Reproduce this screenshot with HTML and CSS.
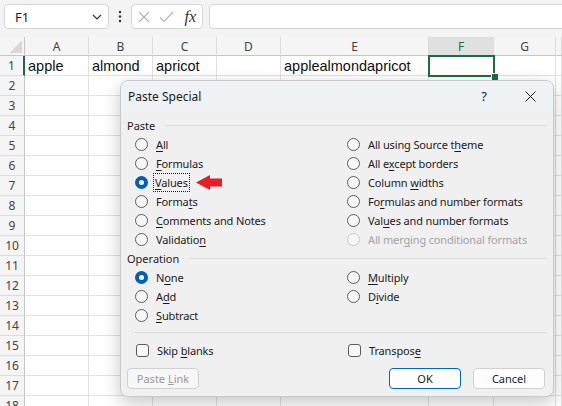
FILE: index.html
```html
<!DOCTYPE html>
<html lang="en">
<head>
    <meta charset="UTF-8">
    <meta name="viewport" content="width=device-width, initial-scale=1.0">
    <title>Paste Special</title>
    <link rel="stylesheet" href="styles.css">
</head>
<body>
    <div class="app">
        <div class="toolbar">
            <div class="namebox">
                <span>F1</span>
                <svg width="10" height="6" viewBox="0 0 10 6"><path d="M1 1 L5 5 L9 1" fill="none" stroke="#333" stroke-width="1.2"/></svg>
            </div>
            <div class="more">
                <svg width="4" height="13" viewBox="0 0 4 13"><circle cx="2" cy="2" r="1.2" fill="#333"/><circle cx="2" cy="6.5" r="1.2" fill="#333"/><circle cx="2" cy="11" r="1.2" fill="#333"/></svg>
            </div>
            <div class="fx-box">
                <span class="fx-btn"><svg width="12" height="12" viewBox="0 0 12 12"><path d="M1 1 L11 11 M11 1 L1 11" stroke="#b4b4b4" stroke-width="1.2"/></svg></span>
                <span class="fx-btn"><svg width="15" height="12" viewBox="0 0 15 12"><path d="M1 6.5 L5 10.5 L14 1" fill="none" stroke="#b4b4b4" stroke-width="1.2"/></svg></span>
                <span class="fx-btn fx">fx</span>
            </div>
            <div class="formula"></div>
        </div>

        <div class="sheet" id="sheet">
            <div class="hd corner"></div>
            <div class="hd">A</div>
            <div class="hd">B</div>
            <div class="hd">C</div>
            <div class="hd">D</div>
            <div class="hd">E</div>
            <div class="hd hd-active">F</div>
            <div class="hd">G</div>
            <div class="hd"></div>

            <div class="rh rh-active">1</div>
            <div class="cell">apple</div>
            <div class="cell">almond</div>
            <div class="cell">apricot</div>
            <div class="cell"></div>
            <div class="cell">applealmondapricot</div>
            <div class="cell selected"><span class="sel-box"><span class="handle"></span></span></div>
            <div class="cell"></div>
            <div class="cell"></div>
        </div>

        <div class="dialog">
            <div class="dlg-title">
                <span>Paste Special</span>
                <div class="title-btns">
                    <span class="tbtn">?</span>
                    <span class="tbtn"><svg width="11" height="11" viewBox="0 0 11 11"><path d="M0.5 0.5 L10.5 10.5 M10.5 0.5 L0.5 10.5" stroke="#1b1b1b" stroke-width="1"/></svg></span>
                </div>
            </div>
            <div class="dlg-body">
                <div class="legend"><span>Paste</span><i></i></div>
                <div class="options">
                    <label class="opt"><span class="radio"></span><span><u>A</u>ll</span></label>
                    <label class="opt"><span class="radio"></span><span>All using Source t<u>h</u>eme</span></label>
                    <label class="opt"><span class="radio"></span><span><u>F</u>ormulas</span></label>
                    <label class="opt"><span class="radio"></span><span>All e<u>x</u>cept borders</span></label>
                    <label class="opt"><span class="radio checked"></span><span class="focus"><u>V</u>alues</span>
                        <svg class="arrow" width="27" height="16" viewBox="0 0 27 16"><path d="M0 7.5 L14 0 L14 3.5 L26 3.5 L26 11.5 L14 11.5 L14 15 Z" fill="#ec1c24"/></svg>
                    </label>
                    <label class="opt"><span class="radio"></span><span>Column <u>w</u>idths</span></label>
                    <label class="opt"><span class="radio"></span><span>Forma<u>t</u>s</span></label>
                    <label class="opt"><span class="radio"></span><span>Fo<u>r</u>mulas and number formats</span></label>
                    <label class="opt"><span class="radio"></span><span><u>C</u>omments and Notes</span></label>
                    <label class="opt"><span class="radio"></span><span>Val<u>u</u>es and number formats</span></label>
                    <label class="opt"><span class="radio"></span><span>Validatio<u>n</u></span></label>
                    <label class="opt disabled"><span class="radio"></span><span>All mer<u>g</u>ing conditional formats</span></label>
                </div>

                <div class="legend"><span>Operation</span><i></i></div>
                <div class="options">
                    <label class="opt"><span class="radio checked"></span><span>N<u>o</u>ne</span></label>
                    <label class="opt"><span class="radio"></span><span><u>M</u>ultiply</span></label>
                    <label class="opt"><span class="radio"></span><span>A<u>d</u>d</span></label>
                    <label class="opt"><span class="radio"></span><span>D<u>i</u>vide</span></label>
                    <label class="opt"><span class="radio"></span><span><u>S</u>ubtract</span></label>
                </div>

                <div class="sep"></div>

                <div class="options checks">
                    <label class="opt"><span class="check"></span><span>Skip <u>b</u>lanks</span></label>
                    <label class="opt"><span class="check"></span><span>Transpos<u>e</u></span></label>
                </div>

                <div class="buttons">
                    <button class="btn" disabled>Paste <u>L</u>ink</button>
                    <span class="spacer"></span>
                    <button class="btn primary">OK</button>
                    <button class="btn">Cancel</button>
                </div>
            </div>
        </div>
    </div>
    <script>
        (function() {
            const sheet = document.getElementById('sheet');

            for (let r = 2; r <= 18; r++) {
                const head = document.createElement('div');
                head.className = 'rh';
                head.textContent = r;
                sheet.appendChild(head);

                for (let c = 0; c < 8; c++) {
                    const cell = document.createElement('div');
                    cell.className = 'cell';
                    sheet.appendChild(cell);
                }
            }
        })();
    </script>
</body>
</html>
```

FILE: styles.css
```css
* {
    margin: 0;
    padding: 0;
    box-sizing: border-box;
}

body {
    width: 562px;
    height: 406px;
    overflow: hidden;
    font-family: "Noto Sans", sans-serif;
    color: #1b1b1b;
    background-color: #fff;
}

.app {
    position: relative;
    height: 406px;
    overflow: hidden;
}

/* formula bar */

.toolbar {
    display: flex;
    align-items: flex-start;
    height: 37px;
    padding: 4px 0 0 4px;
    background-color: #f3f3f3;
}

.namebox {
    display: flex;
    align-items: center;
    justify-content: space-between;
    width: 105px;
    height: 25px;
    padding: 0 6px 0 10px;
    font-size: 13px;
    background-color: #fff;
    border: 1px solid #d6d6d6;
    border-radius: 4px;
}

.more {
    display: flex;
    align-items: center;
    justify-content: center;
    width: 22px;
    height: 25px;
}

.fx-box {
    display: flex;
    width: 72px;
    height: 25px;
    background-color: #fff;
    border: 1px solid #d6d6d6;
    border-radius: 4px;
}

.fx-btn {
    display: flex;
    align-items: center;
    justify-content: center;
    width: 23.3px;
}

.fx {
    font-family: "Liberation Serif", serif;
    font-style: italic;
    font-size: 16px;
    color: #333;
}

.formula {
    flex: 1;
    height: 25px;
    margin: 0 -10px 0 6px;
    background-color: #fff;
    border: 1px solid #d6d6d6;
    border-radius: 4px;
}

/* grid */

.sheet {
    display: grid;
    grid-template-columns: 25px 64px 64px 64px 64px 148px 65px 62px 1fr;
    grid-template-rows: 19px;
    grid-auto-rows: 20px;
}

.hd {
    display: flex;
    align-items: center;
    justify-content: center;
    font-size: 12px;
    color: #444;
    background-color: #f5f5f5;
    border-right: 1px solid #dcdcdc;
    border-bottom: 1px solid #c6c6c6;
}

.hd-active {
    color: #1e6b41;
    background-color: #e0e0e0;
}

.corner {
    background-image: linear-gradient(135deg, transparent 50%, #d8d8d8 50%);
    background-size: 13px 13px;
    background-position: right 2px bottom 2px;
    background-repeat: no-repeat;
    border-right-color: #c6c6c6;
}

.rh {
    display: flex;
    align-items: center;
    justify-content: center;
    font-size: 12px;
    color: #444;
    background-color: #f5f5f5;
    border-right: 1px solid #c6c6c6;
    border-bottom: 1px solid #dcdcdc;
}

.rh-active {
    border-right: 2px solid #1e6b41;
}

.cell {
    position: relative;
    display: flex;
    align-items: center;
    padding-left: 3px;
    font-family: "Liberation Sans", sans-serif;
    font-size: 14.5px;
    color: #111;
    border-right: 1px solid #e1e1e1;
    border-bottom: 1px solid #e1e1e1;
}

.selected {
    z-index: 2;
}

.sel-box {
    position: absolute;
    top: -1px;
    left: -1px;
    width: 67px;
    height: 22px;
    border: 2px solid #1e6b41;
}

.handle {
    position: absolute;
    right: -5px;
    bottom: -5px;
    width: 7px;
    height: 7px;
    background-color: #1e6b41;
    border-top: 1px solid #fff;
    border-left: 1px solid #fff;
}

/* dialog */

.dialog {
    position: absolute;
    z-index: 5;
    top: 80px;
    left: 120px;
    width: 434px;
    height: 317px;
    background-color: #f0f0f0;
    border: 1px solid #c9c9c9;
    border-radius: 8px;
    box-shadow: 0 6px 18px rgba(0, 0, 0, 0.22);
    overflow: hidden;
    font-size: 11px;
}

.dlg-title {
    display: flex;
    align-items: center;
    justify-content: space-between;
    height: 30px;
    padding-left: 7px;
    font-size: 12px;
    background-color: #eff2f5;
}

.title-btns {
    display: flex;
    height: 100%;
}

.tbtn {
    display: flex;
    align-items: center;
    justify-content: center;
    width: 46px;
    font-size: 13px;
}

.dlg-body {
    padding: 5px 6px 0 6px;
}

.legend {
    display: flex;
    align-items: center;
    height: 19px;
}

.legend i {
    flex: 1;
    height: 1px;
    margin-left: 10px;
    background-color: #d9d9d9;
}

.options {
    display: grid;
    grid-template-columns: 212px 1fr;
    grid-auto-rows: 19px;
    padding-left: 8px;
    letter-spacing: -0.15px;
}

.opt {
    display: flex;
    align-items: center;
    white-space: nowrap;
}

.opt u {
    text-underline-offset: 2px;
}

.radio,
.check {
    flex: none;
    width: 13px;
    height: 13px;
    margin-right: 8px;
    background-color: #f7f7f7;
    border: 1px solid #5c5c5c;
    border-radius: 50%;
}

.check {
    border-radius: 3px;
}

.radio.checked {
    background-color: #fff;
    border: 4px solid #005fb8;
}

.disabled {
    color: #a3a3a3;
}

.disabled .radio {
    border-color: #c8c8c8;
}

.focus {
    padding: 1px 1px;
    margin-left: -2px;
    outline: 1px dotted #222;
}

.arrow {
    margin-left: 7px;
}

.sep {
    height: 1px;
    margin: 7px 0 0 8px;
    background-color: #d9d9d9;
}

.checks {
    margin-top: 8px;
}

.checks .opt {
    padding-left: 1px;
}

.buttons {
    display: flex;
    gap: 12px;
    margin: 8px 2px 0 0;
}

.spacer {
    flex: 1;
}

.btn {
    width: 72px;
    height: 21px;
    font-family: inherit;
    font-size: 11px;
    color: #1b1b1b;
    background-color: #fdfdfd;
    border: 1px solid #d0d0d0;
    border-radius: 4px;
}

.btn:disabled {
    color: #9a9a9a;
    background-color: #f7f7f7;
}

.btn.primary {
    border-color: #0067c0;
}
```
